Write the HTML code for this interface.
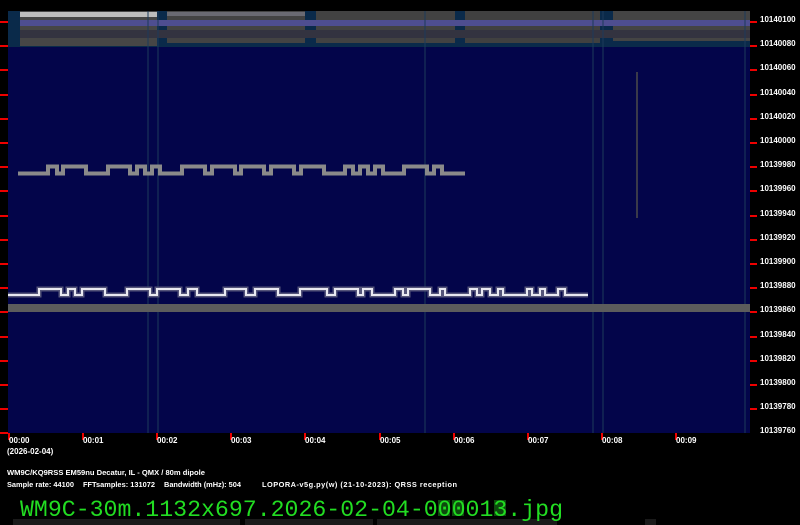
<!DOCTYPE html>
<html><head><meta charset="utf-8"><style>
html,body{margin:0;padding:0;background:#000;width:800px;height:525px;overflow:hidden}
svg{display:block}
</style></head><body>
<svg width="800" height="525" viewBox="0 0 800 525" xmlns="http://www.w3.org/2000/svg">
<rect width="800" height="525" fill="#000"/>
<rect x="8" y="11" width="742" height="422" fill="#03054a"/>
<g>
<rect x="8" y="11" width="742" height="36" fill="#0a2a4a"/>
<rect x="20" y="11" width="137" height="35" fill="#464646"/>
<rect x="20" y="12" width="137" height="5" fill="#bdbdbd"/>
<rect x="167" y="11" width="138" height="32" fill="#434343"/>
<rect x="167" y="12" width="138" height="4" fill="#6a6a72"/>
<rect x="316" y="11" width="139" height="32" fill="#424242"/>
<rect x="465" y="11" width="135" height="32" fill="#404040"/>
<rect x="613" y="11" width="137" height="30" fill="#444"/>
<rect x="20" y="20" width="730" height="6" fill="#4e4e90"/>
<rect x="20" y="30" width="730" height="8" fill="#333340"/>
</g>
<g stroke="#1c3a5a" stroke-width="1">
<line x1="148" y1="11" x2="148" y2="433"/><line x1="158" y1="11" x2="158" y2="433"/>
<line x1="425" y1="11" x2="425" y2="433"/><line x1="593" y1="11" x2="593" y2="433"/>
<line x1="603" y1="11" x2="603" y2="433"/><line x1="745" y1="11" x2="745" y2="433"/>
</g>
<line x1="637" y1="72" x2="637" y2="218" stroke="#3a3a4a" stroke-width="2"/>
<path d="M18,173.5 H48 V166.5 H57 V173.5 H63 V166.5 H86 V173.5 H108 V166.5 H130 V173.5 H137 V166.5 H145 V173.5 H152 V166.5 H160 V173.5 H182 V166.5 H205 V173.5 H212 V166.5 H235 V173.5 H241 V166.5 H264 V173.5 H271 V166.5 H294 V173.5 H301 V166.5 H324 V173.5 H345 V166.5 H353 V173.5 H360 V166.5 H368 V173.5 H375 V166.5 H383 V173.5 H404 V166.5 H427 V173.5 H434 V166.5 H442 V173.5 H465" fill="none" stroke="#8a8a8a" stroke-width="4"/>
<rect x="8" y="304" width="742" height="8" fill="#5c5c5c"/>
<path d="M8,295 H39 V289 H61 V295 H68 V289 H75 V295 H82 V289 H105 V295 H127 V289 H150 V295 H157 V289 H180 V295 H188 V289 H197 V295 H225 V289 H246 V295 H255 V289 H278 V295 H300 V289 H305 V289 H327 V295 H335 V289 H358 V295 H363 V289 H372 V295 H395 V289 H403 V295 H408 V289 H430 V295 H440 V289 H445 V295 H470 V289 H477 V295 H482 V289 H490 V295 H498 V289 H503 V295 H527 V289 H532 V295 H540 V289 H545 V295 H558 V289 H565 V295 H588" fill="none" stroke="#55557a" stroke-width="5"/>
<path d="M8,295 H39 V289 H61 V295 H68 V289 H75 V295 H82 V289 H105 V295 H127 V289 H150 V295 H157 V289 H180 V295 H188 V289 H197 V295 H225 V289 H246 V295 H255 V289 H278 V295 H300 V289 H305 V289 H327 V295 H335 V289 H358 V295 H363 V289 H372 V295 H395 V289 H403 V295 H408 V289 H430 V295 H440 V289 H445 V295 H470 V289 H477 V295 H482 V289 H490 V295 H498 V289 H503 V295 H527 V289 H532 V295 H540 V289 H545 V295 H558 V289 H565 V295 H588" fill="none" stroke="#e8e8f0" stroke-width="2"/>
<g fill="#e00">
<rect x="750" y="21" width="7" height="2"/><rect x="750" y="45" width="7" height="2"/><rect x="750" y="69" width="7" height="2"/><rect x="750" y="94" width="7" height="2"/><rect x="750" y="118" width="7" height="2"/><rect x="750" y="142" width="7" height="2"/><rect x="750" y="166" width="7" height="2"/><rect x="750" y="190" width="7" height="2"/><rect x="750" y="215" width="7" height="2"/><rect x="750" y="239" width="7" height="2"/><rect x="750" y="263" width="7" height="2"/><rect x="750" y="287" width="7" height="2"/><rect x="750" y="311" width="7" height="2"/><rect x="750" y="336" width="7" height="2"/><rect x="750" y="360" width="7" height="2"/><rect x="750" y="384" width="7" height="2"/><rect x="750" y="408" width="7" height="2"/>
<rect x="0" y="21" width="8" height="2"/><rect x="0" y="45" width="8" height="2"/><rect x="0" y="69" width="8" height="2"/><rect x="0" y="94" width="8" height="2"/><rect x="0" y="118" width="8" height="2"/><rect x="0" y="142" width="8" height="2"/><rect x="0" y="166" width="8" height="2"/><rect x="0" y="190" width="8" height="2"/><rect x="0" y="215" width="8" height="2"/><rect x="0" y="239" width="8" height="2"/><rect x="0" y="263" width="8" height="2"/><rect x="0" y="287" width="8" height="2"/><rect x="0" y="311" width="8" height="2"/><rect x="0" y="336" width="8" height="2"/><rect x="0" y="360" width="8" height="2"/><rect x="0" y="384" width="8" height="2"/><rect x="0" y="408" width="8" height="2"/><rect x="0" y="432" width="8" height="2"/>
<rect x="8" y="433" width="2" height="7"/><rect x="82" y="433" width="2" height="7"/><rect x="156" y="433" width="2" height="7"/><rect x="230" y="433" width="2" height="7"/><rect x="304" y="433" width="2" height="7"/><rect x="379" y="433" width="2" height="7"/><rect x="453" y="433" width="2" height="7"/><rect x="527" y="433" width="2" height="7"/><rect x="601" y="433" width="2" height="7"/><rect x="675" y="433" width="2" height="7"/>
</g>
<g fill="#fff" font-family="Liberation Sans, sans-serif" font-size="8" font-weight="bold">
<text x="760" y="22">10140100</text><text x="760" y="46">10140080</text><text x="760" y="70">10140060</text><text x="760" y="95">10140040</text><text x="760" y="119">10140020</text><text x="760" y="143">10140000</text><text x="760" y="167">10139980</text><text x="760" y="191">10139960</text><text x="760" y="216">10139940</text><text x="760" y="240">10139920</text><text x="760" y="264">10139900</text><text x="760" y="288">10139880</text><text x="760" y="312">10139860</text><text x="760" y="337">10139840</text><text x="760" y="361">10139820</text><text x="760" y="385">10139800</text><text x="760" y="409">10139780</text><text x="760" y="433">10139760</text>
<text x="9" y="443">00:00</text><text x="83" y="443">00:01</text><text x="157" y="443">00:02</text><text x="231" y="443">00:03</text><text x="305" y="443">00:04</text><text x="380" y="443">00:05</text><text x="454" y="443">00:06</text><text x="528" y="443">00:07</text><text x="602" y="443">00:08</text><text x="676" y="443">00:09</text>
<text x="7" y="454">(2026-02-04)</text>
</g>
<g fill="#fff" font-family="Liberation Sans, sans-serif" font-size="7.4" font-weight="bold">
<text x="7" y="475" textLength="198" lengthAdjust="spacingAndGlyphs">WM9C/KQ9RSS EM59nu Decatur, IL - QMX / 80m dipole</text>
<text x="7" y="487" textLength="67">Sample rate: 44100</text><text x="83" y="487" textLength="72">FFTsamples: 131072</text><text x="164" y="487" textLength="77">Bandwidth (mHz): 504</text><text x="262" y="487" textLength="195">LOPORA-v5g.py(w) (21-10-2023): QRSS reception</text>
</g>
<rect x="13" y="519" width="227" height="6" fill="#1a1a1a"/>
<rect x="245" y="519" width="128" height="6" fill="#1a1a1a"/>
<rect x="377" y="519" width="180" height="6" fill="#1a1a1a"/>
<rect x="645" y="519" width="11" height="6" fill="#1a1a1a"/>
<rect x="438" y="500" width="12" height="16" fill="#0d4a0d"/>
<rect x="452" y="500" width="12" height="16" fill="#0d4a0d"/>
<rect x="494" y="500" width="12" height="16" fill="#0d4a0d"/>
<text x="20" y="516" fill="#22dd22" font-family="Liberation Mono, monospace" font-size="23.5" textLength="543" lengthAdjust="spacingAndGlyphs">WM9C-30m.1132x697.2026-02-04-000013.jpg</text>
</svg>
</body></html>
